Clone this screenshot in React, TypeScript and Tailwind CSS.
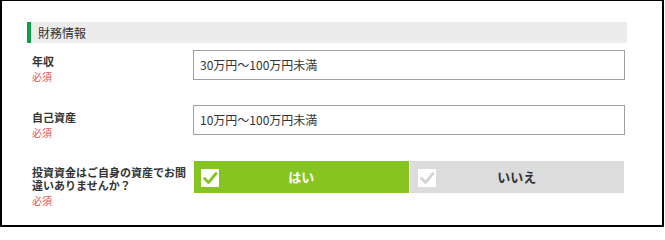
import React from 'react'

const font = { fontFamily: '"Noto Sans CJK JP", "Noto Sans", sans-serif' }

function CheckBox({ active }: { active: boolean }) {
  return (
    <span className="flex h-[18px] w-[18px] items-center justify-center bg-white">
      <svg viewBox="0 0 18 18" className="h-[18px] w-[18px]">
        <path
          d="M3.5 9.5 L7.5 13.5 L15 4.5"
          fill="none"
          stroke={active ? '#86c422' : '#d4d4d4'}
          strokeWidth="2.8"
          strokeLinecap="round"
          strokeLinejoin="round"
        />
      </svg>
    </span>
  )
}

function Label({ lines }: { lines: string[] }) {
  return (
    <div className="w-[166px] shrink-0 pl-[5px]">
      <div className="text-[11px] leading-[13px] font-bold text-[#333]">
        {lines.map((l, i) => (
          <React.Fragment key={l}>
            {i > 0 && <br />}
            {l}
          </React.Fragment>
        ))}
      </div>
      <div className="mt-[3px] text-[10px] leading-[12px] text-[#e5505a]">必須</div>
    </div>
  )
}

export default function App() {
  return (
    <div
      className="h-[227px] w-[664px] border-t border-r-2 border-b-2 border-l-2 border-black bg-white pt-[21px] pl-[25px]"
      style={font}
    >
      <div className="w-[600px]">
        {/* 見出し */}
        <div className="flex h-[21px] items-center border-l-4 border-[#0ca04a] bg-[#ececec] pl-[7px] text-[12px] text-[#333]">
          財務情報
        </div>

        {/* 年収 */}
        <div className="mt-[7px] flex h-[30px] items-start">
          <div className="pt-[5px]">
            <Label lines={['年収']} />
          </div>
          <div className="flex h-[30px] w-[432px] items-center border border-[#a0a0a0] pl-[6px] text-[12px] text-[#333]">
            30万円～100万円未満
          </div>
        </div>

        {/* 自己資産 */}
        <div className="mt-[25px] flex h-[30px] items-start">
          <div className="pt-[6px]">
            <Label lines={['自己資産']} />
          </div>
          <div className="flex h-[30px] w-[432px] items-center border border-[#a0a0a0] pl-[6px] text-[12px] text-[#333]">
            10万円～100万円未満
          </div>
        </div>

        {/* 投資資金 */}
        <div className="mt-[26px] flex h-[32px] items-start">
          <div className="pt-[5px]">
            <Label lines={['投資資金はご自身の資産でお間', '違いありませんか？']} />
          </div>
          <div className="flex h-[32px] w-[431px] gap-[1px] pl-[1px]">
            <div className="relative flex flex-1 items-center justify-center bg-[#86c422] text-[13px] font-bold text-white">
              <span className="absolute top-[8px] left-[7px]">
                <CheckBox active />
              </span>
              はい
            </div>
            <div className="relative flex flex-1 items-center justify-center bg-[#dcdcdc] text-[13px] font-bold text-[#333]">
              <span className="absolute top-[8px] left-[8px]">
                <CheckBox active={false} />
              </span>
              いいえ
            </div>
          </div>
        </div>
      </div>
    </div>
  )
}
